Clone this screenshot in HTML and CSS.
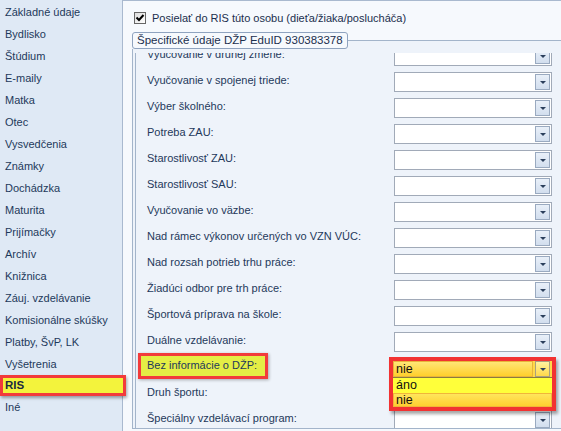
FILE: index.html
```html
<!DOCTYPE html>
<html lang="sk">
<head>
<meta charset="utf-8">
<title>RIS</title>
<link rel="stylesheet" href="styles.css">
</head>
<body>
<div class="app">
  <aside class="nav">
    <div class="nav-item">Základné údaje</div>
    <div class="nav-item">Bydlisko</div>
    <div class="nav-item">Štúdium</div>
    <div class="nav-item">E-maily</div>
    <div class="nav-item">Matka</div>
    <div class="nav-item">Otec</div>
    <div class="nav-item">Vysvedčenia</div>
    <div class="nav-item">Známky</div>
    <div class="nav-item">Dochádzka</div>
    <div class="nav-item">Maturita</div>
    <div class="nav-item">Prijímačky</div>
    <div class="nav-item">Archív</div>
    <div class="nav-item">Knižnica</div>
    <div class="nav-item">Záuj. vzdelávanie</div>
    <div class="nav-item">Komisionálne skúšky</div>
    <div class="nav-item">Platby, ŠvP, LK</div>
    <div class="nav-item">Vyšetrenia</div>
    <div class="nav-item active">RIS</div>
    <div class="nav-item">Iné</div>
  </aside>
  <main class="panel">
    <div class="top">
      <span class="check"><svg width="10" height="10" viewBox="0 0 10 10"><path d="M1.5 4.5 L4 7 L8.5 2" fill="none" stroke="#000" stroke-width="2"/></svg></span>
      <span class="top-label">Posielať do RIS túto osobu (dieťa/žiaka/poslucháča)</span>
    </div>
    <fieldset class="group">
      <legend class="legend">Špecifické údaje DŽP EduID 930383378</legend>
      <div class="scroll">
        <div class="rows">
          <div class="row"><span class="lbl">Vyučovanie v druhej zmene:</span><span class="combo"><span class="btn"></span></span></div>
          <div class="row"><span class="lbl">Vyučovanie v spojenej triede:</span><span class="combo"><span class="btn"></span></span></div>
          <div class="row"><span class="lbl">Výber školného:</span><span class="combo"><span class="btn"></span></span></div>
          <div class="row"><span class="lbl">Potreba ZAU:</span><span class="combo"><span class="btn"></span></span></div>
          <div class="row"><span class="lbl">Starostlivosť ZAU:</span><span class="combo"><span class="btn"></span></span></div>
          <div class="row"><span class="lbl">Starostlivosť SAU:</span><span class="combo"><span class="btn"></span></span></div>
          <div class="row"><span class="lbl">Vyučovanie vo väzbe:</span><span class="combo"><span class="btn"></span></span></div>
          <div class="row"><span class="lbl">Nad rámec výkonov určených vo VZN VÚC:</span><span class="combo"><span class="btn"></span></span></div>
          <div class="row"><span class="lbl">Nad rozsah potrieb trhu práce:</span><span class="combo"><span class="btn"></span></span></div>
          <div class="row"><span class="lbl">Žiadúci odbor pre trh práce:</span><span class="combo"><span class="btn"></span></span></div>
          <div class="row"><span class="lbl">Športová príprava na škole:</span><span class="combo"><span class="btn"></span></span></div>
          <div class="row"><span class="lbl">Duálne vzdelávanie:</span><span class="combo"><span class="btn"></span></span></div>
          <div class="row"><span class="lbl hl">Bez informácie o DŽP:</span>
            <span class="combo open"><span class="btn"></span>
              <span class="popup">
                <span class="pfield"><span class="pval">nie</span><span class="pbtn"></span></span>
                <span class="opt">áno</span>
                <span class="opt sel">nie</span>
              </span>
            </span>
          </div>
          <div class="row"><span class="lbl">Druh športu:</span><span class="combo"><span class="btn"></span></span></div>
          <div class="row"><span class="lbl">Špeciálny vzdelávací program:</span><span class="combo"><span class="btn"></span></span></div>
        </div>
      </div>
    </fieldset>
  </main>
</div>
</body>
</html>
```

FILE: styles.css
```css
* { box-sizing: border-box; }
html, body { margin: 0; padding: 0; }
body {
  font-family: "Liberation Sans", Arial, sans-serif;
  font-size: 11px;
  color: #1e395b;
  background: #eef3fa;
}
.app {
  display: flex;
  width: 561px;
  height: 431px;
  overflow: hidden;
}
.nav {
  width: 123px;
  flex: none;
  background: #dfe9f5;
  border-right: 1px solid #a9b9cf;
  padding-top: 1px;
}
.nav-item {
  height: 22px;
  line-height: 22px;
  padding-left: 5px;
  white-space: nowrap;
}
.nav-item.active {
  position: relative;
  z-index: 2;
  margin-right: -4px;
  height: 21px;
  line-height: 15px;
  padding-left: 2px;
  border: 3px solid #f23b3b;
  background: #f3f33c;
  font-weight: bold;
  font-size: 11.5px;
  color: #1a2a40;
  box-shadow: 1px 2px 3px rgba(0,0,0,0.35);
}
.panel {
  flex: 1;
  min-width: 0;
  border-top: 1px solid #a9b9cf;
  background: #f6f9fd;
  display: flex;
  flex-direction: column;
}
.top {
  height: 31px;
  flex: none;
  display: flex;
  align-items: center;
  padding: 2px 0 0 11px;
  gap: 6px;
}
.check {
  width: 12px;
  height: 12px;
  border: 1px solid #666;
  background: linear-gradient(135deg, #dcdcdc, #ffffff);
  display: flex;
  align-items: center;
  justify-content: center;
}
.check svg { display: block; }
.top-label { font-size: 11px; color: #1b2f4d; }
.group {
  margin: 0 0 0 9px;
  padding: 0 0 0 2px;
  border: 1px solid #a3b4ca;
  border-right: none;
  background: #eef3fa;
  min-width: 0;
}
.legend {
  margin-left: -3px;
  padding: 0 4px;
  height: 17px;
  line-height: 15px;
  border: 1px solid #8fa3bf;
  border-radius: 3px;
  background: #f6f9fd;
  font-size: 11.5px;
  color: #1b2f4d;
}
.scroll {
  margin-top: 4px;
  height: 375px;
  overflow: hidden;
  border-left: 1px solid #a3b4ca;
}
.rows { margin-top: -10px; padding-left: 11px; }
.row {
  display: grid;
  grid-template-columns: 247px 158px;
  height: 26px;
  align-items: center;
}
.lbl { white-space: nowrap; margin-bottom: 4px; }
.lbl.hl {
  width: 130px;
  height: 26px;
  margin-top: -4px;
  margin-bottom: 0;
  margin-left: -9px;
  padding-left: 6px;
  line-height: 19px;
  border: 3px solid #f23b3b;
  background: #e4ee45;
  box-shadow: 1px 1px 3px rgba(0,0,0,0.3);
}
.combo {
  position: relative;
  height: 20px;
  border: 1px solid #a1aab8;
  background: #fff;
  display: flex;
  justify-content: flex-end;
  align-items: flex-start;
  padding: 1px 1px 0 0;
}
.btn {
  width: 15px;
  height: 16px;
  border: 1px solid #9aaac0;
  background: linear-gradient(#e9f0f9, #d2deee);
  display: flex;
  align-items: center;
  justify-content: center;
}
.btn::after, .pbtn::after {
  content: "";
  border-left: 3px solid transparent;
  border-right: 3px solid transparent;
  border-top: 3px solid #2b3f5c;
  margin-top: 1px;
}
.popup {
  position: absolute;
  z-index: 3;
  left: -6px;
  top: -2px;
  width: 167px;
  height: 54px;
  border: 4px solid #f23232;
  background: #ffff3a;
  box-shadow: 2px 3px 3px rgba(0,0,0,0.35);
  display: flex;
  flex-direction: column;
  font-size: 12.5px;
  color: #111;
}
.pfield {
  display: flex;
  height: 17px;
  border-bottom: 1px solid #8a7a40;
  gap: 2px;
  padding-right: 2px;
  background: #ffd94a;
}
.pval {
  flex: 1;
  border: 1px solid #e8b43a;
  background: linear-gradient(#ffe676, #ffcf2c);
  padding-left: 2px;
  line-height: 14px;
}
.pbtn {
  width: 15px;
  border: 1px solid #a8a080;
  background: linear-gradient(#fff2a0, #ffd84a);
  display: flex;
  align-items: center;
  justify-content: center;
}
.opt {
  height: 15px;
  line-height: 14px;
  padding-left: 3px;
}
.opt.sel {
  height: 14px;
  line-height: 12px;
  padding-left: 2px;
  border: 1px solid #f1b53a;
  background: linear-gradient(#ffe55c, #ffcf30);
}
```
